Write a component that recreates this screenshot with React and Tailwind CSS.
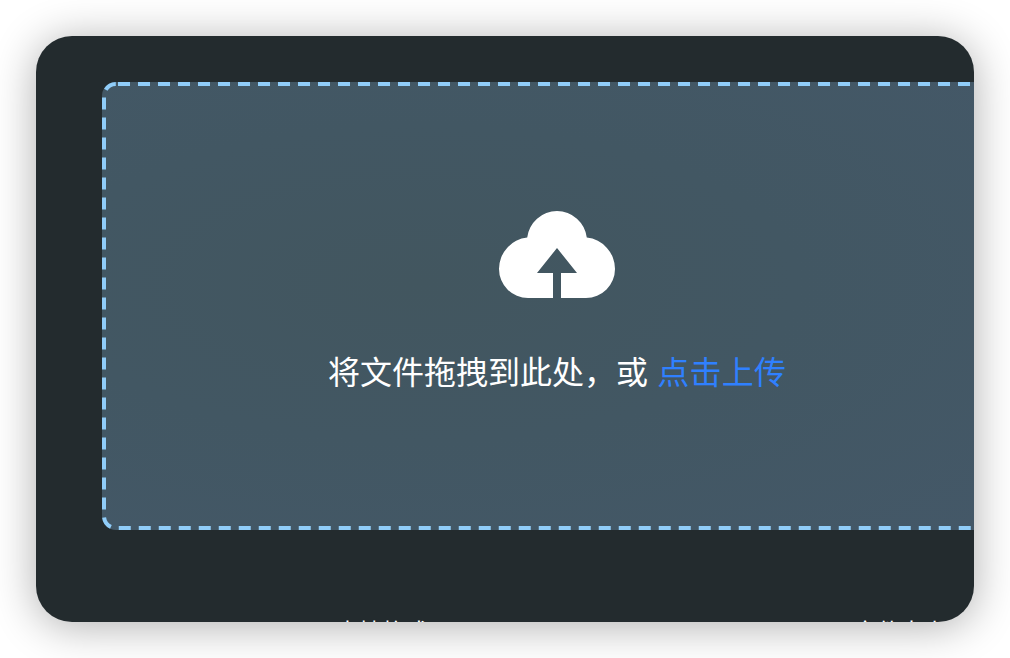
import React from 'react';

const CloudIcon = () => (
  <svg width="116" height="87" viewBox="0 0 116 87" className="block">
    <path
      fill="#ffffff"
      d="M29 87A29 29 0 0 1 0 58A31.5 31.5 0 0 1 28.2 26.6A30 30 0 0 1 87.8 26.6A31.5 31.5 0 0 1 116 58A29 29 0 0 1 87 87H62V62H78L58 37L38 62H54V87Z"
    />
  </svg>
);

const App = () => {
  return (
    <div className="h-[658px] w-[1010px] bg-white p-[36px] font-['Noto_Sans_CJK_SC','Noto_Sans',sans-serif]">
      <div className="h-[586px] w-[938px] overflow-hidden rounded-[36px] bg-[#232b2e] pt-[46px] pl-[66px] shadow-[0_4px_44px_rgba(0,0,0,0.32)]">
        <div className="relative flex h-[448px] w-[908px] flex-col rounded-[14px] bg-[radial-gradient(ellipse_at_35%_45%,#42565f_0%,#425763_45%,#445868_100%)] pt-[129px] pl-[397px]">
          <svg className="absolute inset-0 h-full w-full" fill="none">
            <rect
              x="2"
              y="2"
              width="903.65"
              height="444"
              rx="12"
              stroke="#90cdf9"
              strokeWidth="4"
              strokeDasharray="12 8"
              strokeDashoffset="-2"
            />
          </svg>
          <CloudIcon />
          <p className="mt-[48px] -ml-[171px] text-[32px] leading-[48px] whitespace-nowrap text-white">
            将文件拖拽到此处，或 <span className="ml-[2px] tracking-[0.25px] text-[#2f80ff]">点击上传</span>
          </p>
        </div>
        <div className="mt-[82px] flex text-[23px] leading-9 whitespace-nowrap text-white">
          <span className="ml-[234px]">支持格式</span>
          <span className="ml-[426px]">文件大小</span>
        </div>
      </div>
    </div>
  );
};

export default App;
